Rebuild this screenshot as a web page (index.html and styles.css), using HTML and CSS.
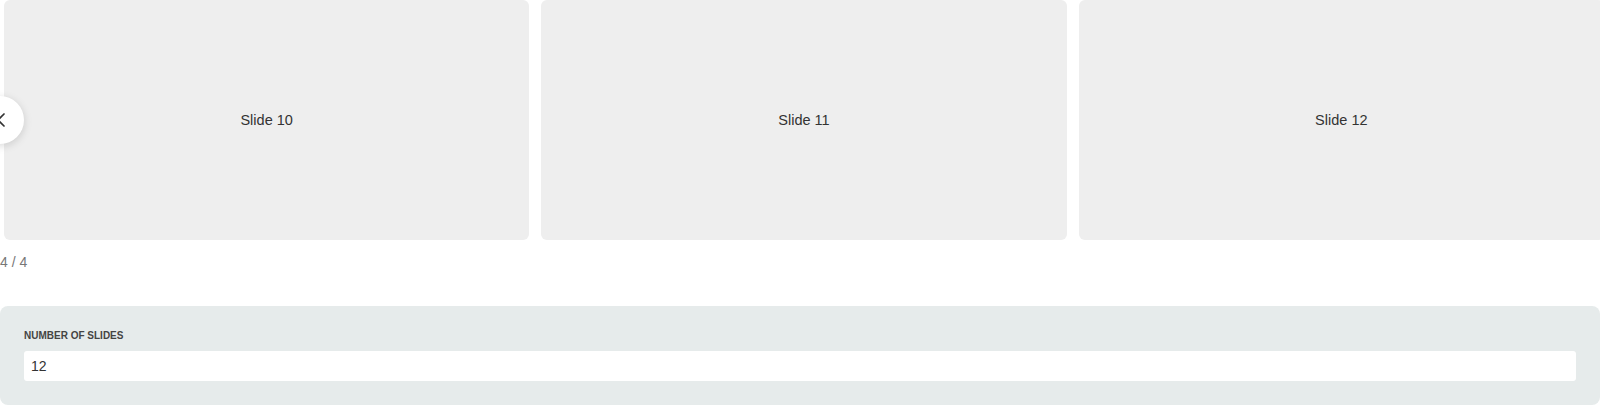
FILE: index.html
```html
<!DOCTYPE html>
<html lang="en">
<head>
<meta charset="utf-8">
<title>Carousel</title>
<link rel="stylesheet" href="styles.css">
</head>
<body>
<div class="carousel">
  <div class="viewport">
    <div class="track">
      <div class="slide">Slide 10</div>
      <div class="slide">Slide 11</div>
      <div class="slide">Slide 12</div>
    </div>
  </div>
  <button class="nav prev" aria-label="Previous">
    <svg width="16" height="16" viewBox="0 0 16 16"><path d="M11 2 L5 8 L11 14" fill="none" stroke="#333" stroke-width="1.7" stroke-linecap="round" stroke-linejoin="round"/></svg>
  </button>
</div>
<div class="counter">4 / 4</div>
<div class="panel">
  <label class="label" for="n">Number of slides</label>
  <input class="input" id="n" type="text" value="12">
</div>
</body>
</html>
```

FILE: styles.css
```css
* { box-sizing: border-box; }
html, body { margin: 0; padding: 0; background: #fff; }
body {
  font-family: "Liberation Sans", Arial, Helvetica, sans-serif;
  color: #333;
  width: 1600px;
  overflow: hidden;
}
.carousel { position: relative; height: 240px; }
.viewport { overflow: hidden; height: 240px; }
.track {
  display: flex;
  gap: 12px;
  padding-left: 4px;
}
.slide {
  flex: 0 0 525.33px;
  height: 240px;
  background: #eeeeee;
  border-radius: 6px;
  display: flex;
  align-items: center;
  justify-content: center;
  font-size: 14.5px;
  color: #333;
}
.nav {
  position: absolute;
  top: 96px;
  left: -24px;
  width: 48px;
  height: 48px;
  border-radius: 50%;
  border: none;
  background: #fff;
  box-shadow: 0 2px 8px rgba(0,0,0,0.15);
  display: flex;
  align-items: center;
  justify-content: center;
  padding: 0;
}
.nav svg { margin-left: 2px; }
.counter {
  margin-top: 14px;
  font-size: 14px;
  line-height: 16px;
  color: #777;
}
.panel {
  margin-top: 36px;
  background: #e6ebeb;
  border-radius: 8px;
  padding: 24px 24px 24px;
  display: flex;
  flex-direction: column;
}
.label {
  font-size: 10px;
  font-weight: bold;
  text-transform: uppercase;
  color: #444;
  line-height: 12px;
  margin-bottom: 9px;
}
.input {
  width: 100%;
  height: 30px;
  border: none;
  border-radius: 3px;
  background: #fff;
  padding: 0 7px;
  font-family: "Liberation Sans", Arial, sans-serif;
  font-size: 14px;
  color: #333;
  outline: none;
}
```
